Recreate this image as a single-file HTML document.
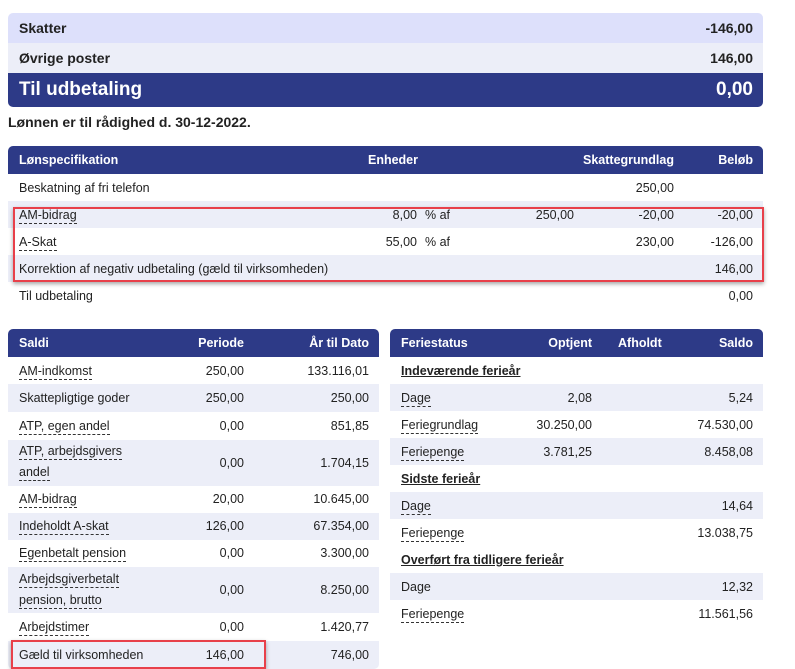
<!DOCTYPE html>
<html><head><meta charset="utf-8"><style>
*{margin:0;padding:0;box-sizing:border-box}
body{width:795px;height:669px;background:#fff;font-family:"Liberation Sans",sans-serif;font-size:12.5px;color:#222;position:relative;overflow:hidden}
.r{position:absolute}
.t{position:absolute;white-space:nowrap}
.rt{position:absolute;white-space:nowrap;text-align:right}
.h{background:#2d3a87;color:#fff;font-weight:bold}
.l{background:#eceef8}
.u{border-bottom:1px dashed #333;line-height:15px}
.s{font-weight:bold;text-decoration:underline}
.red{position:absolute;border:2px solid #e8404a;box-shadow:0 2px 4px rgba(0,0,0,.35)}
</style></head><body>
<!-- summary -->
<div class="r" style="left:8px;top:13px;width:755px;height:30px;background:#dde0fb;border-radius:5px 5px 0 0"></div>
<div class="t" style="left:19px;top:20px;font-weight:bold;font-size:14px">Skatter</div>
<div class="rt" style="right:42px;top:20px;font-weight:bold;font-size:14px">-146,00</div>
<div class="r" style="left:8px;top:43px;width:755px;height:30px;background:#eceef8"></div>
<div class="t" style="left:19px;top:50px;font-weight:bold;font-size:14px">Øvrige poster</div>
<div class="rt" style="right:42px;top:50px;font-weight:bold;font-size:14px">146,00</div>
<div class="r h" style="left:8px;top:73px;width:755px;height:34px;border-radius:0 0 5px 5px"></div>
<div class="t" style="left:19px;top:79px;font-weight:bold;font-size:19px;color:#fff">Til udbetaling</div>
<div class="rt" style="right:42px;top:79px;font-weight:bold;font-size:19px;color:#fff">0,00</div>
<div class="t" style="left:8px;top:114px;font-weight:bold;font-size:14px">Lønnen er til rådighed d. 30-12-2022.</div>

<!-- lonspec -->
<div class="r h" style="left:8px;top:146px;width:755px;height:28px;border-radius:5px 5px 0 0"></div>
<div class="t" style="left:19px;top:153px;color:#fff;font-weight:bold">Lønspecifikation</div>
<div class="rt" style="right:377px;top:153px;color:#fff;font-weight:bold">Enheder</div>
<div class="rt" style="right:121px;top:153px;color:#fff;font-weight:bold">Skattegrundlag</div>
<div class="rt" style="right:42px;top:153px;color:#fff;font-weight:bold">Beløb</div>
<div class="t" style="left:19px;top:181px">Beskatning af fri telefon</div>
<div class="rt" style="right:121px;top:181px">250,00</div>
<div class="r l" style="left:8px;top:201px;width:755px;height:27px"></div>
<div class="t u" style="left:19px;top:208px">AM-bidrag</div>
<div class="rt" style="right:378px;top:208px">8,00</div><div class="t" style="left:425px;top:208px">% af</div>
<div class="rt" style="right:221px;top:208px">250,00</div>
<div class="rt" style="right:121px;top:208px">-20,00</div>
<div class="rt" style="right:42px;top:208px">-20,00</div>
<div class="t u" style="left:19px;top:235px">A-Skat</div>
<div class="rt" style="right:378px;top:235px">55,00</div><div class="t" style="left:425px;top:235px">% af</div>
<div class="rt" style="right:121px;top:235px">230,00</div>
<div class="rt" style="right:42px;top:235px">-126,00</div>
<div class="r l" style="left:8px;top:255px;width:755px;height:27px"></div>
<div class="t" style="left:19px;top:262px">Korrektion af negativ udbetaling (gæld til virksomheden)</div>
<div class="rt" style="right:42px;top:262px">146,00</div>
<div class="t" style="left:19px;top:289px">Til udbetaling</div>
<div class="rt" style="right:42px;top:289px">0,00</div>
<div class="red" style="left:13px;top:207px;width:751px;height:75px"></div>

<!-- saldi -->
<div class="r h" style="left:8px;top:329px;width:371px;height:28px;border-radius:5px 5px 0 0"></div>
<div class="t" style="left:19px;top:336px;color:#fff;font-weight:bold">Saldi</div>
<div class="rt" style="right:551px;top:336px;color:#fff;font-weight:bold">Periode</div>
<div class="rt" style="right:426px;top:336px;color:#fff;font-weight:bold">År til Dato</div>
<div class="r l" style="left:8px;top:384px;width:371px;height:28px"></div>
<div class="r l" style="left:8px;top:440px;width:371px;height:46px"></div>
<div class="r l" style="left:8px;top:513px;width:371px;height:27px"></div>
<div class="r l" style="left:8px;top:567px;width:371px;height:46px"></div>
<div class="r l" style="left:8px;top:641px;width:371px;height:28px;border-radius:0 0 5px 5px"></div>

<div class="t u" style="left:19px;top:364px">AM-indkomst</div><div class="rt" style="right:551px;top:364px">250,00</div><div class="rt" style="right:426px;top:364px">133.116,01</div>
<div class="t" style="left:19px;top:391px">Skattepligtige goder</div><div class="rt" style="right:551px;top:391px">250,00</div><div class="rt" style="right:426px;top:391px">250,00</div>
<div class="t u" style="left:19px;top:419px">ATP, egen andel</div><div class="rt" style="right:551px;top:419px">0,00</div><div class="rt" style="right:426px;top:419px">851,85</div>
<div class="t u" style="left:19px;top:444px">ATP, arbejdsgivers</div><div class="t u" style="left:19px;top:465px">andel</div><div class="rt" style="right:551px;top:456px">0,00</div><div class="rt" style="right:426px;top:456px">1.704,15</div>
<div class="t u" style="left:19px;top:492px">AM-bidrag</div><div class="rt" style="right:551px;top:492px">20,00</div><div class="rt" style="right:426px;top:492px">10.645,00</div>
<div class="t u" style="left:19px;top:519px">Indeholdt A-skat</div><div class="rt" style="right:551px;top:519px">126,00</div><div class="rt" style="right:426px;top:519px">67.354,00</div>
<div class="t u" style="left:19px;top:546px">Egenbetalt pension</div><div class="rt" style="right:551px;top:546px">0,00</div><div class="rt" style="right:426px;top:546px">3.300,00</div>
<div class="t u" style="left:19px;top:572px">Arbejdsgiverbetalt</div><div class="t u" style="left:19px;top:593px">pension, brutto</div><div class="rt" style="right:551px;top:583px">0,00</div><div class="rt" style="right:426px;top:583px">8.250,00</div>
<div class="t u" style="left:19px;top:620px">Arbejdstimer</div><div class="rt" style="right:551px;top:620px">0,00</div><div class="rt" style="right:426px;top:620px">1.420,77</div>
<div class="t" style="left:19px;top:648px">Gæld til virksomheden</div><div class="rt" style="right:551px;top:648px">146,00</div><div class="rt" style="right:426px;top:648px">746,00</div>
<div class="red" style="left:11px;top:640px;width:255px;height:29px"></div>

<!-- feriestatus -->
<div class="r h" style="left:390px;top:329px;width:373px;height:28px;border-radius:5px 5px 0 0"></div>
<div class="t" style="left:401px;top:336px;color:#fff;font-weight:bold">Feriestatus</div>
<div class="rt" style="right:203px;top:336px;color:#fff;font-weight:bold">Optjent</div>
<div class="t" style="left:618px;top:336px;color:#fff;font-weight:bold">Afholdt</div>
<div class="rt" style="right:42px;top:336px;color:#fff;font-weight:bold">Saldo</div>
<div class="r l" style="left:390px;top:384px;width:373px;height:27px"></div>
<div class="r l" style="left:390px;top:438px;width:373px;height:27px"></div>
<div class="r l" style="left:390px;top:492px;width:373px;height:27px"></div>
<div class="r l" style="left:390px;top:573px;width:373px;height:27px"></div>
<div class="t s" style="left:401px;top:364px">Indeværende ferieår</div>
<div class="t u" style="left:401px;top:391px">Dage</div><div class="rt" style="right:203px;top:391px">2,08</div><div class="rt" style="right:42px;top:391px">5,24</div>
<div class="t u" style="left:401px;top:418px">Feriegrundlag</div><div class="rt" style="right:203px;top:418px">30.250,00</div><div class="rt" style="right:42px;top:418px">74.530,00</div>
<div class="t u" style="left:401px;top:445px">Feriepenge</div><div class="rt" style="right:203px;top:445px">3.781,25</div><div class="rt" style="right:42px;top:445px">8.458,08</div>
<div class="t s" style="left:401px;top:472px">Sidste ferieår</div>
<div class="t u" style="left:401px;top:499px">Dage</div><div class="rt" style="right:42px;top:499px">14,64</div>
<div class="t u" style="left:401px;top:526px">Feriepenge</div><div class="rt" style="right:42px;top:526px">13.038,75</div>
<div class="t s" style="left:401px;top:553px">Overført fra tidligere ferieår</div>
<div class="t" style="left:401px;top:580px">Dage</div><div class="rt" style="right:42px;top:580px">12,32</div>
<div class="t u" style="left:401px;top:607px">Feriepenge</div><div class="rt" style="right:42px;top:607px">11.561,56</div>
</body></html>
